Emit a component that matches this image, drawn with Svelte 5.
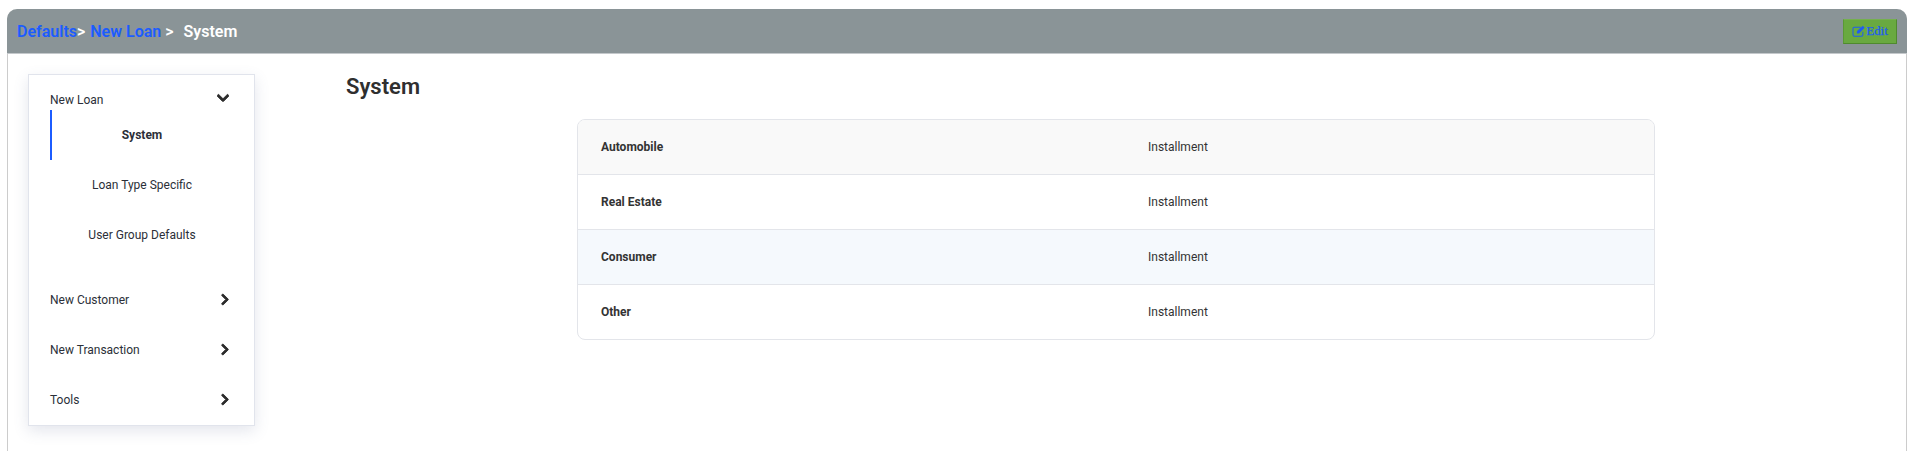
<script lang="ts">
    const subItems = ["System", "Loan Type Specific", "User Group Defaults"];
    const otherSections = ["New Customer", "New Transaction", "Tools"];
    const rows = [
        { name: "Automobile", value: "Installment", tone: "grey" },
        { name: "Real Estate", value: "Installment", tone: "" },
        { name: "Consumer", value: "Installment", tone: "blue" },
        { name: "Other", value: "Installment", tone: "" }
    ];
</script>

<div class="frame">
    <header class="topbar">
        <div class="crumbs">
            <a href="#defaults">Defaults</a><span class="sep">&gt;</span>
            <a href="#new-loan">New Loan</a>
            <span class="sep">&gt;</span>
            <span class="current">System</span>
        </div>
        <button class="edit">
            <svg viewBox="0 0 16 14" width="14" height="12" fill="none" stroke="currentColor" stroke-width="1.2">
                <path d="M12.5 8v3.4a1.6 1.6 0 0 1-1.6 1.6H2.6A1.6 1.6 0 0 1 1 11.4V4.1a1.6 1.6 0 0 1 1.6-1.6H10" />
                <path d="M5.5 7.2 12.4 1l2.2 2.2L8 10H5.5z" fill="currentColor" stroke="none" />
            </svg><span>Edit</span>
        </button>
    </header>

    <div class="body">
        <nav class="menu">
            <div class="section open">
                <span>New Loan</span>
                <svg class="chev-down" viewBox="0 0 448 512" width="12" height="14">
                    <path d="M207.029 381.476L12.686 187.132c-9.373-9.373-9.373-24.569 0-33.941l22.667-22.667c9.357-9.357 24.522-9.375 33.901-.04L224 284.505l154.745-154.021c9.379-9.335 24.544-9.317 33.901.04l22.667 22.667c9.373 9.373 9.373 24.569 0 33.941L240.971 381.476c-9.373 9.372-24.569 9.372-33.942 0z" />
                </svg>
            </div>
            <ul class="subs">
                {#each subItems as item, i}
                    <li class:active={i === 0}>{item}</li>
                {/each}
            </ul>
            {#each otherSections as name}
                <div class="section">
                    <span class="label">{name}</span>
                    <svg class="chev-right" viewBox="0 0 320 512" width="8" height="13">
                        <path d="M285.476 272.971L91.132 467.314c-9.373 9.373-24.569 9.373-33.941 0l-22.667-22.667c-9.357-9.357-9.375-24.522-.04-33.901L188.505 256 34.484 101.255c-9.335-9.379-9.317-24.544.04-33.901l22.667-22.667c9.373-9.373 24.569-9.373 33.941 0L285.475 239.03c9.373 9.372 9.373 24.568.001 33.941z" />
                    </svg>
                </div>
            {/each}
        </nav>

        <main class="content">
            <h1>System</h1>
            <div class="table">
                {#each rows as row}
                    <div class="row {row.tone}">
                        <div class="name">{row.name}</div>
                        <div class="value">{row.value}</div>
                    </div>
                {/each}
            </div>
        </main>
    </div>
</div>

<style>
    :global(body) {
        background: #fff;
        font-family: Roboto, "Liberation Sans", sans-serif;
        overflow: hidden;
    }

    .frame {
        margin: 9px 3px 0 7px;
        height: 460px;
        box-sizing: border-box;
        border: 1px solid #ccc;
        border-top: 0;
        border-radius: 10px 10px 0 0;
    }

    .topbar {
        height: 45px;
        margin-left: -1px;
        margin-right: -1px;
        box-sizing: border-box;
        padding: 0 10px 0 10px;
        display: flex;
        align-items: center;
        justify-content: space-between;
        background: #8a9497;
        border-bottom: 1px solid #c4c8cb;
        border-radius: 10px 10px 0 0;
    }

    .crumbs {
        font-size: 16px;
        font-weight: 600;
        color: #fff;
        white-space: pre-wrap;
    }

    .crumbs a {
        color: #1c5cff;
        text-decoration: none;
    }

    .crumbs .sep {
        margin-right: 1px;
    }

    .crumbs .current {
        margin-left: 5px;
    }

    .edit {
        width: 54px;
        height: 25px;
        padding: 0;
        display: flex;
        align-items: center;
        justify-content: center;
        background: #69a940;
        border: 1px solid;
        border-color: #75b04e #4f8a2e #4f8a2e #5a9a35;
        color: #1f5cf2;
        font-family: "Liberation Serif", serif;
        font-size: 13px;
    }

    .edit span {
        -webkit-text-stroke: 0.25px #1f5cf2;
    }

    .body {
        display: flex;
        align-items: flex-start;
    }

    .menu {
        width: 227px;
        box-sizing: border-box;
        margin: 20px 0 0 20px;
        padding: 0 25px 1px 21px;
        background: #fff;
        border: 1px solid #e1e4ec;
        box-shadow: 0 5px 14px rgba(90, 100, 140, 0.16);
        font-size: 12px;
        color: #2b2f38;
    }

    .section {
        height: 50px;
        display: flex;
        align-items: center;
        justify-content: space-between;
    }

    .section .label {
        padding-top: 1px;
    }

    .section.open {
        height: 35px;
        align-items: flex-end;
        padding-bottom: 3px;
        box-sizing: border-box;
    }

    .section svg {
        fill: #2b2b2b;
        stroke: #2b2b2b;
        stroke-width: 36;
    }

    .chev-down {
        margin-bottom: 2px;
    }

    .subs {
        list-style: none;
        margin: 0 0 14px;
        padding: 0;
    }

    .subs li {
        height: 50px;
        display: flex;
        align-items: center;
        justify-content: center;
        border-left: 2px solid transparent;
        margin-right: -3px;
    }

    .subs li.active {
        border-left-color: #1c5cff;
        font-weight: 700;
    }

    .content {
        margin: 19px 0 0 91px;
        flex: 1;
    }

    h1 {
        margin: 0 0 18px;
        font-size: 22px;
        font-weight: 600;
        line-height: 28px;
        color: #2f2f2f;
    }

    .table {
        width: 1078px;
        box-sizing: border-box;
        margin-left: 231px;
        border: 1px solid #e3e5ea;
        border-radius: 8px;
        overflow: hidden;
        font-size: 12px;
        color: #333;
    }

    .row {
        height: 55px;
        display: flex;
        align-items: center;
        padding-left: 23px;
        border-top: 1px solid #e3e5ea;
        box-sizing: border-box;
    }

    .row:first-child {
        height: 54px;
        border-top: 0;
    }

    .row.grey {
        background: #f9f9f9;
    }

    .row.blue {
        background: #f5f9fd;
    }

    .name {
        width: 547px;
        font-weight: 700;
    }
</style>
